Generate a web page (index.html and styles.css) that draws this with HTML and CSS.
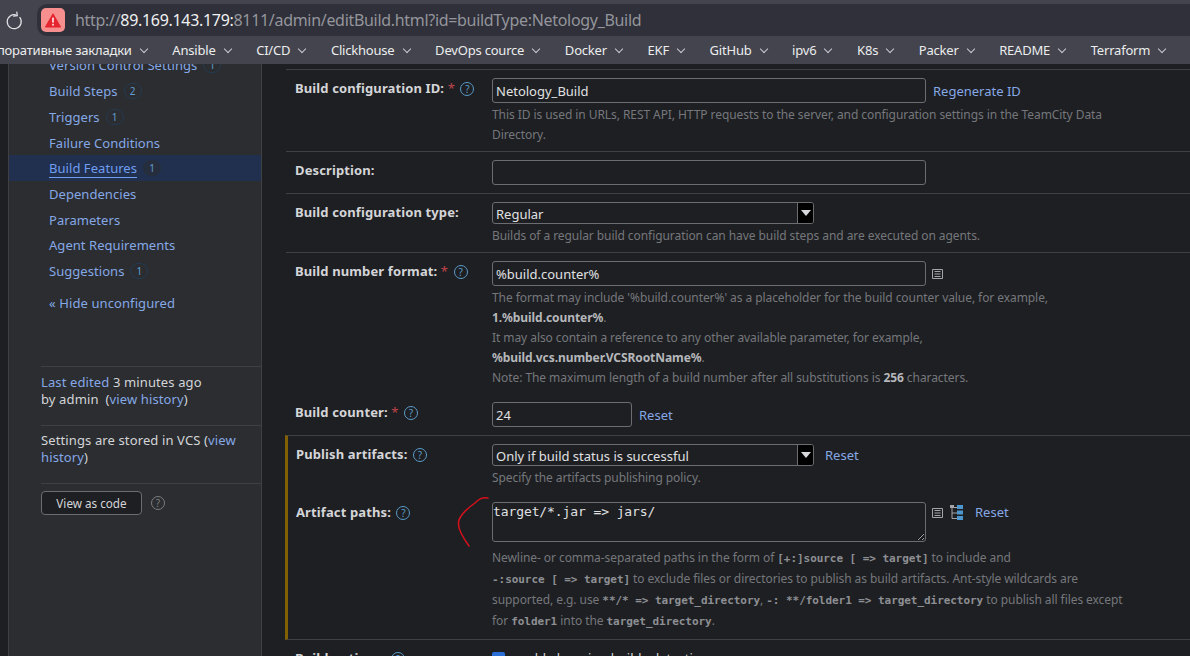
FILE: index.html
```html
<!DOCTYPE html>
<html lang="en">
<head>
<meta charset="utf-8">
<title>Edit Build</title>
<link rel="stylesheet" href="styles.css">
</head>
<body>
<header class="toolbar">
  <svg class="reload" width="20" height="20" viewBox="0 0 20 20"><path d="M15.600 6.200a7 7 0 1 1-3-2.100" fill="none" stroke="#e2e3e6" stroke-width="1.200"/><path d="M12.700.6 13.300 4.700 9.100 5.200" fill="none" stroke="#e2e3e6" stroke-width="1.200"/></svg>
  <div class="address">
    <span class="alert"><svg width="16" height="15" viewBox="0 0 16 15"><path d="M8 .8 15.600 14H.4z" fill="#e5252f" stroke="#e5252f" stroke-linejoin="round"/><rect x="7.100" y="4.600" width="1.800" height="5" fill="#fbdada"/><rect x="7.100" y="10.800" width="1.800" height="1.800" fill="#fbdada"/></svg></span>
    <span class="url">http://<b>89.169.143.179:</b>8111/admin/editBuild.html?id=buildType:Netology_Build</span>
  </div>
</header>
<nav class="bookmarks">
  <span class="mark first">Корпоративные закладки<i class="chev"></i></span>
  <span class="mark">Ansible<i class="chev"></i></span>
  <span class="mark">CI/CD<i class="chev"></i></span>
  <span class="mark">Clickhouse<i class="chev"></i></span>
  <span class="mark">DevOps cource<i class="chev"></i></span>
  <span class="mark">Docker<i class="chev"></i></span>
  <span class="mark">EKF<i class="chev"></i></span>
  <span class="mark">GitHub<i class="chev"></i></span>
  <span class="mark">ipv6<i class="chev"></i></span>
  <span class="mark">K8s<i class="chev"></i></span>
  <span class="mark">Packer<i class="chev"></i></span>
  <span class="mark">README<i class="chev"></i></span>
  <span class="mark">Terraform<i class="chev"></i></span>
</nav>
<div class="page">
  <aside class="sidebar">
    <ul class="menu">
      <li><a>Version Control Settings</a><span class="count">1</span></li>
      <li><a>Build Steps</a><span class="count">2</span></li>
      <li><a>Triggers</a><span class="count">1</span></li>
      <li><a>Failure Conditions</a></li>
      <li class="active"><a>Build Features</a><span class="count">1</span></li>
      <li><a>Dependencies</a></li>
      <li><a>Parameters</a></li>
      <li><a>Agent Requirements</a></li>
      <li><a>Suggestions</a><span class="count">1</span></li>
    </ul>
    <p class="hide"><a>« Hide unconfigured</a></p>
    <div class="info edited"><a>Last edited</a> 3 minutes ago<br>by admin &nbsp;(<a>view history</a>)</div>
    <div class="info vcs">Settings are stored in VCS (<a>view history</a>)</div>
    <div class="info code"><button class="codebtn">View as code</button><span class="q gray">?</span></div>
  </aside>
  <main class="main">
    <section class="row id-row">
      <div class="label">Build configuration ID: <em>*</em> <span class="q">?</span></div>
      <div class="field">
        <div class="line"><input class="text wide" value="Netology_Build"><a class="act">Regenerate ID</a></div>
        <p class="help">This ID is used in URLs, REST API, HTTP requests to the server, and configuration settings in the TeamCity Data Directory.</p>
      </div>
    </section>
    <section class="row desc-row">
      <div class="label">Description:</div>
      <div class="field"><input class="text wide"></div>
    </section>
    <section class="row">
      <div class="label">Build configuration type:</div>
      <div class="field">
        <div class="select">Regular<span class="drop"></span></div>
        <p class="help">Builds of a regular build configuration can have build steps and are executed on agents.</p>
      </div>
    </section>
    <section class="row plain format-row">
      <div class="label">Build number format: <em>*</em> <span class="q">?</span></div>
      <div class="field">
        <div class="line"><input class="text wide" value="%build.counter%"><svg class="list" width="11" height="10" viewBox="0 0 11 10"><path d="M.5.5h10v9H.5zM2.500 2.500h6M2.500 5h6M2.500 7.500h6" fill="none" stroke="#a3a5a9"/></svg></div>
        <p class="help">The format may include '%build.counter%' as a placeholder for the build counter value, for example,<br><b>1.%build.counter%</b>.<br>It may also contain a reference to any other available parameter, for example,<br><b>%build.vcs.number.VCSRootName%</b>.<br>Note: The maximum length of a build number after all substitutions is <b>256</b> characters.</p>
      </div>
    </section>
    <section class="row counter-row">
      <div class="label">Build counter: <em>*</em> <span class="q">?</span></div>
      <div class="field"><div class="line"><input class="text short" value="24"><a class="act">Reset</a></div></div>
    </section>
    <div class="modified">
      <section class="row plain publish">
        <div class="label">Publish artifacts: <span class="q">?</span></div>
        <div class="field">
          <div class="line"><div class="select">Only if build status is successful<span class="drop"></span></div><a class="act">Reset</a></div>
          <p class="help">Specify the artifacts publishing policy.</p>
        </div>
      </section>
      <section class="row plain artifacts">
        <div class="label">Artifact paths: <span class="q">?</span></div>
        <div class="field">
          <div class="line top"><textarea class="area">target/*.jar =&gt; jars/</textarea><svg class="list" width="11" height="10" viewBox="0 0 11 10"><path d="M.5.5h10v9H.5zM2.500 2.500h6M2.500 5h6M2.500 7.500h6" fill="none" stroke="#a3a5a9"/></svg><svg class="tree" width="14" height="15" viewBox="0 0 14 15"><path d="M2 3v10.500h5M2 8h5M2 2.500h5" fill="none" stroke="#a3a5a9"/><rect x="0" y="0" width="4" height="3" fill="#a3a5a9"/><rect x="7" y="0" width="6" height="4" fill="#4d97cf"/><rect x="7" y="5.500" width="6" height="4" fill="#4d97cf"/><rect x="7" y="11" width="6" height="4" fill="#4d97cf"/></svg><a class="act">Reset</a></div>
          <p class="help code-help">Newline- or comma-separated paths in the form of <code>[+:]source [ =&gt; target]</code> to include and<br><code>-:source [ =&gt; target]</code> to exclude files or directories to publish as build artifacts. Ant-style wildcards are<br>supported, e.g. use <code>**/* =&gt; target_directory</code>, <code>-: **/folder1 =&gt; target_directory</code> to publish all files except<br>for <code>folder1</code> into the <code>target_directory</code>.</p>
        </div>
      </section>
    </div>
    <section class="row plain options">
      <div class="label">Build options: <span class="q">?</span></div>
      <div class="field"><label class="check"><span class="box"></span>enable hanging builds detection</label></div>
    </section>
    <svg class="scribble" width="36" height="54" viewBox="0 0 36 54"><path d="M34 2C28 1 25 3 21 7 14 12 7 18 5 24c-1.500 5 0 9 2 13 2 4 5 9 8 13" fill="none" stroke="#d8101c" stroke-width="1.500" stroke-linecap="round"/></svg>
  </main>
</div>
</body>
</html>
```
FILE: styles.css
```css
* { box-sizing: border-box; }
html, body { margin: 0; height: 656px; overflow: hidden; }
body { background: #1e1f22; color: #d4d5d8; font: 13px/20px "Noto Sans", "Open Sans", sans-serif; }
a { color: #86a8e6; }
p { margin: 0; }
ul { list-style: none; margin: 0; padding: 0; }

.toolbar { height: 36px; background: #43444e; display: flex; align-items: flex-start; padding-top: 4px; }
.reload { margin: 7px 0 0 4px; flex: none; }
.address { margin-left: 13px; flex: 1; height: 32px; background: #2f3039; border-radius: 10px 0 0 10px; display: flex; align-items: center; padding-left: 4px; }
.alert { width: 24px; height: 24px; border-radius: 5px; background: #f88f8f; display: flex; align-items: center; justify-content: center; }
.url { margin-left: 10px; font: 16px/24px "Noto Sans", sans-serif; color: #94959c; letter-spacing: -.31px; white-space: nowrap; }
.url b { font-weight: 400; color: #eff0f2; }

.bookmarks { height: 28px; background: #43444e; display: flex; align-items: center; gap: 24.600px; overflow: hidden; white-space: nowrap; color: #eceded; font: 13px/28px "Noto Sans", sans-serif; letter-spacing: -.2px; }
.mark { display: inline-flex; align-items: center; flex: none; }
.first { margin-left: -26px; }
.chev { width: 6px; height: 6px; margin: -3px 1px 0 9px; border-right: 1px solid #c9cad0; border-bottom: 1px solid #c9cad0; transform: rotate(45deg); }

.page { height: 592px; display: flex; overflow: hidden; }
.sidebar { width: 254px; margin-left: 8px; flex: none; background: #2b2d30; border-left: 1px solid #3e4043; border-right: 1px solid #3e4043; letter-spacing: .05px; }
.menu { margin-top: -11.400px; }
.menu li { height: 25.700px; padding-left: 40px; display: flex; align-items: center; gap: 6px; }
.menu a { color: #86a8e6; }
.menu .active { background: #21304f; }
.active a { color: #6f9ef0; border-bottom: 1px solid #6f9ef0; line-height: 17px; margin-top: 1px; }
.count { width: 18px; height: 16px; border-radius: 8px; border: 1px solid #243a52; color: #5f9fd0; font-size: 10px; line-height: 14px; text-align: center; }
.active .count { background: #262e3d; border-color: #262e3d; }
.hide { margin: 9px 0 0 40px; letter-spacing: .1px; }
.info { margin-left: 32px; border-top: 1px solid #3e4043; line-height: 17px; letter-spacing: .12px; }
.edited { margin-top: 53px; padding: 7px 0 0; height: 59px; }
.vcs { height: 58px; padding-top: 6px; padding-right: 18px; }
.code { padding-top: 7px; display: flex; align-items: center; gap: 9px; }
.codebtn { width: 101px; height: 24px; background: #1e1f22; border: 1px solid #6b6d71; border-radius: 4px; color: #d4d5d8; font: 11.700px "Noto Sans", sans-serif; padding: 1px 0 0; }

.main { flex: 1; margin-left: 24px; min-width: 0; position: relative; padding-top: 5px; }
.row { display: grid; grid-template-columns: 197px 1fr; padding: 8px 0 6px 9px; border-top: 1px solid #3e4043; }
.desc-row { padding-bottom: 8px; }
.plain { border-top: 0; }
.row.plain { padding-bottom: 0; }
.format-row { border-top: 1px solid #3e4043; }
.label { font-weight: 700; color: #d4d5d8; white-space: nowrap; letter-spacing: .12px; }
.label em { color: #c0434a; font-style: normal; font-weight: 400; }
.q { display: inline-flex; width: 14px; height: 14px; margin-left: 2px; border: 1px solid #5a9bc8; border-radius: 50%; align-items: center; justify-content: center; color: #5a9bc8; font-size: 10px; font-weight: 400; line-height: 12px; vertical-align: 0; }
.q.gray { border-color: #7a7c80; color: #7a7c80; margin-left: 0; }
.line { display: flex; align-items: center; }
.line.top { align-items: flex-start; }
.text { height: 25px; background: #1e1f22; border: 1px solid #6b6d71; border-radius: 3px; color: #e0e1e3; font: 13px "Noto Sans", sans-serif; padding: 0 3px; outline: 0; }
.wide { width: 434px; }
.short { width: 140px; }
.act { margin-left: 7px; color: #86a8e6; white-space: nowrap; }
.help { color: #75777c; font-size: 12px; line-height: 20px; width: 640px; margin-top: 2px; letter-spacing: -.07px; }
.help b { color: #b5b7bb; }
.select { width: 322px; height: 22px; border: 1px solid #6b6d71; border-radius: 3px; padding-left: 3px; color: #e0e1e3; line-height: 23px; position: relative; font-size: 13px; }
.drop { position: absolute; top: 0; right: 0; bottom: 0; width: 16px; background: #000; border-left: 1px solid #6b6d71; border-radius: 0 2px 2px 0; }
.drop::after { content: ""; position: absolute; left: 3px; top: 7px; border: 5px solid transparent; border-top: 6px solid #d8d9dc; border-bottom: 0; }
.list { margin-left: 6px; flex: none; }
.line.top .list { margin-top: 6px; }
.tree { margin: 3px 0 0 7px; flex: none; }
.line.top .act { margin-left: 11px; }
.row.counter-row { border-top: 0; padding: 14px 0 8px 9px; }
.modified { margin-left: -1px; border-top: 1px solid #3e4043; border-bottom: 1px solid #3e4043; border-left: 3px solid #806000; height: 205px; }
.modified .row { padding-left: 8px; grid-template-columns: 196px 1fr; }
.publish .act { margin-left: 11px; }
.row.artifacts { padding-top: 14px; }
.area { display: block; width: 434px; height: 40px; background: #1e1f22; border: 1px solid #6b6d71; border-radius: 3px; color: #e0e1e3; font: 13px/18px "DejaVu Sans Mono", monospace; letter-spacing: -.1px; padding: 0; outline: 0; }
.help.code-help { margin-top: 5px; line-height: 21px; white-space: nowrap; }
code { font: 700 11px "DejaVu Sans Mono", monospace; letter-spacing: -.05px; color: #8d8f94; }
.options { padding-top: 8px; }
.check { display: flex; align-items: center; gap: 7px; color: #d4d5d8; }
.box { width: 13px; height: 13px; background: #2a6fd6; border-radius: 2px; }
.scribble { position: absolute; left: 168px; top: 432px; }
```
